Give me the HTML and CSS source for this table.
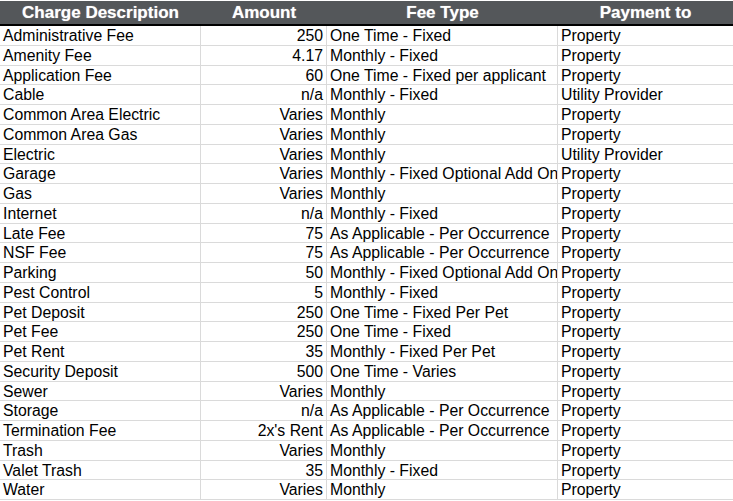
FILE: index.html
```html
<!DOCTYPE html>
<html>
<head>
<meta charset="utf-8">
<link rel="stylesheet" href="styles.css">
</head>
<body>
<table class="sheet">
  <colgroup>
    <col class="c-desc"><col class="c-amt"><col class="c-type"><col class="c-pay">
  </colgroup>
  <thead>
    <tr class="head">
      <th>Charge Description</th><th>Amount</th><th>Fee Type</th><th>Payment to</th>
    </tr>
  </thead>
  <tbody>
    <tr><td>Administrative Fee</td><td class="num">250</td><td>One Time - Fixed</td><td>Property</td></tr>
    <tr><td>Amenity Fee</td><td class="num">4.17</td><td>Monthly - Fixed</td><td>Property</td></tr>
    <tr><td>Application Fee</td><td class="num">60</td><td>One Time - Fixed per applicant</td><td>Property</td></tr>
    <tr><td>Cable</td><td class="num">n/a</td><td>Monthly - Fixed</td><td>Utility Provider</td></tr>
    <tr><td>Common Area Electric</td><td class="num">Varies</td><td>Monthly</td><td>Property</td></tr>
    <tr><td>Common Area Gas</td><td class="num">Varies</td><td>Monthly</td><td>Property</td></tr>
    <tr><td>Electric</td><td class="num">Varies</td><td>Monthly</td><td>Utility Provider</td></tr>
    <tr><td>Garage</td><td class="num">Varies</td><td>Monthly - Fixed Optional Add On</td><td>Property</td></tr>
    <tr><td>Gas</td><td class="num">Varies</td><td>Monthly</td><td>Property</td></tr>
    <tr><td>Internet</td><td class="num">n/a</td><td>Monthly - Fixed</td><td>Property</td></tr>
    <tr><td>Late Fee</td><td class="num">75</td><td>As Applicable - Per Occurrence</td><td>Property</td></tr>
    <tr><td>NSF Fee</td><td class="num">75</td><td>As Applicable - Per Occurrence</td><td>Property</td></tr>
    <tr><td>Parking</td><td class="num">50</td><td>Monthly - Fixed Optional Add On</td><td>Property</td></tr>
    <tr><td>Pest Control</td><td class="num">5</td><td>Monthly - Fixed</td><td>Property</td></tr>
    <tr><td>Pet Deposit</td><td class="num">250</td><td>One Time - Fixed Per Pet</td><td>Property</td></tr>
    <tr><td>Pet Fee</td><td class="num">250</td><td>One Time - Fixed</td><td>Property</td></tr>
    <tr><td>Pet Rent</td><td class="num">35</td><td>Monthly - Fixed Per Pet</td><td>Property</td></tr>
    <tr><td>Security Deposit</td><td class="num">500</td><td>One Time - Varies</td><td>Property</td></tr>
    <tr><td>Sewer</td><td class="num">Varies</td><td>Monthly</td><td>Property</td></tr>
    <tr><td>Storage</td><td class="num">n/a</td><td>As Applicable - Per Occurrence</td><td>Property</td></tr>
    <tr><td>Termination Fee</td><td class="num">2x's Rent</td><td>As Applicable - Per Occurrence</td><td>Property</td></tr>
    <tr><td>Trash</td><td class="num">Varies</td><td>Monthly</td><td>Property</td></tr>
    <tr><td>Valet Trash</td><td class="num">35</td><td>Monthly - Fixed</td><td>Property</td></tr>
    <tr><td>Water</td><td class="num">Varies</td><td>Monthly</td><td>Property</td></tr>
  </tbody>
</table>
</body>
</html>
```
FILE: styles.css
```css
html, body {
  margin: 0;
  padding: 0;
  background: #ffffff;
}
body {
  padding-top: 1px;
  font-family: "Liberation Sans", Arial, sans-serif;
  color: #000000;
  overflow: hidden;
}
.sheet {
  table-layout: fixed;
  width: 733px;
  border-collapse: separate;
  border-spacing: 0;
}
.c-desc { width: 201px; }
.c-amt { width: 126px; }
.c-type { width: 231px; }
.c-pay { width: 175px; }

.head th {
  box-sizing: border-box;
  height: 25px;
  padding: 0;
  background: #54575a;
  border-bottom: 2px solid #000000;
  color: #ffffff;
  font-weight: bold;
  font-size: 17px;
  line-height: 22px;
  text-align: center;
  white-space: nowrap;
  overflow: hidden;
  text-shadow: 0 0 1px rgba(255,255,255,0.6);
}
.sheet td {
  box-sizing: border-box;
  height: 19.75px;
  padding: 2px 3px 0 3px;
  border-right: 1px solid #dadada;
  border-bottom: 1px solid #dadada;
  font-size: 15.8px;
  line-height: 16.75px;
  white-space: nowrap;
  overflow: hidden;
  text-overflow: clip;
  vertical-align: top;
}
.sheet td:last-child {
  border-right: none;
}
.sheet td.num {
  text-align: right;
}
```
